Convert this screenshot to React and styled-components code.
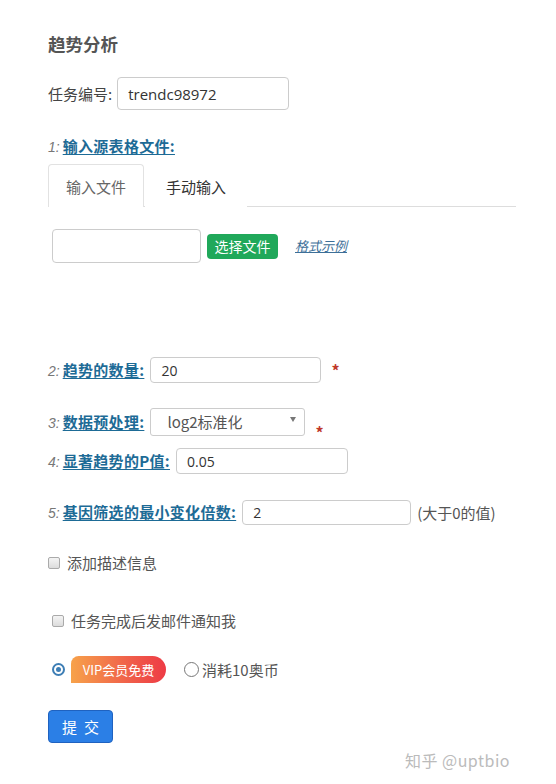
import React from 'react';
import styled, { createGlobalStyle } from 'styled-components';

const GlobalStyle = createGlobalStyle`
  html, body {
    margin: 0;
    padding: 0;
    background: #fff;
  }
  body {
    font-family: "Noto Sans CJK SC", "Noto Sans", sans-serif;
    color: #333;
  }
`;

const Page = styled.div`
  position: relative;
  width: 556px;
  height: 784px;
  box-sizing: border-box;
  padding: 32px 0 0 48px;
  overflow: hidden;
`;

const Title = styled.h3`
  margin: 0;
  height: 24px;
  line-height: 24px;
  font-size: 17.5px;
  font-weight: 700;
  color: #555;
`;

const Row = styled.div`
  display: flex;
  align-items: center;
  margin-top: ${(p) => p.$mt || 0}px;
  margin-left: ${(p) => p.$ml || 0}px;
  gap: ${(p) => (p.$gap == null ? 5 : p.$gap)}px;
  font-size: 15px;
  line-height: 20px;
`;

const Label = styled.span`
  font-size: 15px;
  color: #444;
  white-space: nowrap;
`;

const StepLabel = styled.span`
  display: inline-flex;
  align-items: baseline;
  white-space: nowrap;
  font-size: 15px;
`;

const StepNo = styled.i`
  font-family: "Liberation Sans", sans-serif;
  color: #777;
  margin-right: 3px;
  font-size: 14px;
`;

const StepLink = styled.a`
  color: #1d6b96;
  font-weight: 700;
  font-size: 15px;
  letter-spacing: 0.3px;
  text-decoration: underline;
  text-underline-offset: 2px;
`;

const TextInput = styled.input`
  box-sizing: border-box;
  width: ${(p) => p.$w}px;
  height: ${(p) => p.$h || 26}px;
  padding: 0 10px;
  border: 1px solid #ccc;
  border-radius: 4px;
  font-family: "Open Sans", "Noto Sans", sans-serif;
  font-size: ${(p) => p.$fs || 14}px;
  color: #333;
  background: #fff;
  outline: none;
`;

const Star = styled.span`
  color: #c0392b;
  font-size: 16px;
  font-weight: 700;
  margin-left: 4px;
  align-self: ${(p) => (p.$low ? 'flex-end' : 'center')};
  line-height: 20px;
  margin-bottom: ${(p) => (p.$low ? '-6px' : '0')};
`;

const Tabs = styled.div`
  display: flex;
  width: 468px;
  height: 42px;
  margin-top: 7px;
  border-bottom: 1px solid #ddd;
`;

const Tab = styled.div`
  display: flex;
  align-items: center;
  padding: 0 ${(p) => (p.$active ? 17 : 20)}px;
  margin-left: ${(p) => (p.$active ? 0 : 1)}px;
  box-sizing: border-box;
  height: 43px;
  margin-bottom: -1px;
  font-size: 15px;
  color: ${(p) => (p.$active ? '#666' : '#333')};
  background: #fff;
  border: 1px solid ${(p) => (p.$active ? '#e2e2e2' : 'transparent')};
  border-bottom: none;
  border-radius: 4px 4px 0 0;
`;

const GreenButton = styled.button`
  height: 25px;
  width: 71px;
  padding: 0;
  border: none;
  border-radius: 4px;
  background: #20a85a;
  color: #fff;
  font-family: inherit;
  font-size: 14px;
  margin-left: 1px;
`;

const ExampleLink = styled.a`
  margin-left: 12px;
  font-size: 13px;
  font-style: italic;
  color: #3d6f98;
  text-decoration: underline;
`;

const Select = styled.div`
  box-sizing: border-box;
  width: ${(p) => p.$w}px;
  height: 28px;
  display: flex;
  align-items: center;
  justify-content: space-between;
  padding: 0 8px 0 16px;
  border: 1px solid #ccc;
  border-radius: 3px;
  font-size: 15px;
  color: #555;
  background: #fff;
`;

const Caret = styled.span`
  width: 0;
  height: 0;
  border-left: 3px solid transparent;
  border-right: 3px solid transparent;
  border-top: 5px solid #777;
  margin-top: -6px;
`;

const Hint = styled.span`
  color: #555;
  font-size: 15px;
  white-space: nowrap;
`;

const Check = styled.span`
  display: inline-block;
  width: 10px;
  height: 10px;
  border: 1px solid #aaa;
  border-radius: 2px;
  background: linear-gradient(#f4f4f4, #dcdcdc);
  margin-right: 3px;
`;

const Radio = styled.span`
  box-sizing: border-box;
  display: inline-flex;
  align-items: center;
  justify-content: center;
  width: ${(p) => p.$size || 13}px;
  height: ${(p) => p.$size || 13}px;
  border-radius: 50%;
  border: ${(p) => (p.$on ? '2px solid #3d7eb5' : '1px solid #777')};
  background: #fff;
  &::after {
    content: '';
    display: ${(p) => (p.$on ? 'block' : 'none')};
    width: 5px;
    height: 5px;
    border-radius: 50%;
    background: #3d7eb5;
  }
`;

const VipBadge = styled.span`
  display: inline-flex;
  align-items: center;
  justify-content: center;
  width: 95px;
  height: 27px;
  border-radius: 8px 14px 14px 0;
  background: linear-gradient(90deg, #f7a24a 0%, #f0604a 60%, #ee3b45 100%);
  color: #fff;
  font-size: 13px;
  margin: 0 18px 0 6px;
`;

const Submit = styled.button`
  display: block;
  margin-top: 27px;
  width: 65px;
  height: 33px;
  border: 1px solid #1f62c0;
  border-radius: 4px;
  background: #2b7fe6;
  color: #fff;
  font-family: inherit;
  font-size: 15px;
  letter-spacing: 7px;
  padding: 0 0 0 7px;
`;

const Watermark = styled.div`
  position: absolute;
  right: 46px;
  top: 748px;
  font-size: 16px;
  color: #bbb;
  letter-spacing: 0.5px;
`;

const Step = ({ no, children }) => (
  <StepLabel>
    <StepNo>{no}:</StepNo>
    <StepLink>{children}</StepLink>
  </StepLabel>
);

export default function App() {
  return (
    <>
      <GlobalStyle />
      <Page>
        <Title>趋势分析</Title>

        <Row $mt={21}>
          <Label>任务编号:</Label>
          <TextInput $w={172} $h={33} $fs={15} defaultValue="trendc98972" />
        </Row>

        <Row $mt={26}>
          <Step no="1">输入源表格文件:</Step>
        </Row>

        <Tabs>
          <Tab $active>输入文件</Tab>
          <Tab>手动输入</Tab>
        </Tabs>

        <Row $mt={22} $ml={4}>
          <TextInput $w={149} $h={34} />
          <GreenButton>选择文件</GreenButton>
          <ExampleLink>格式示例</ExampleLink>
        </Row>

        <Row $mt={94} $gap={6}>
          <Step no="2">趋势的数量:</Step>
          <TextInput $w={171} defaultValue="20" />
          <Star>*</Star>
        </Row>

        <Row $mt={25} $gap={6}>
          <Step no="3">数据预处理:</Step>
          <Select $w={155}>
            log2标准化
            <Caret />
          </Select>
          <Star $low>*</Star>
        </Row>

        <Row $mt={12} $gap={6}>
          <Step no="4">显著趋势的P值:</Step>
          <TextInput $w={172} defaultValue="0.05" />
        </Row>

        <Row $mt={26} $gap={6}>
          <Step no="5">基因筛选的最小变化倍数:</Step>
          <TextInput $w={169} $h={25} defaultValue="2" />
          <Hint>(大于0的值)</Hint>
        </Row>

        <Row $mt={28} $gap={4}>
          <Check />
          <Hint>添加描述信息</Hint>
        </Row>

        <Row $mt={38} $ml={4} $gap={4}>
          <Check />
          <Hint>任务完成后发邮件通知我</Hint>
        </Row>

        <Row $mt={25} $ml={4} $gap={0}>
          <Radio $on />
          <VipBadge>VIP会员免费</VipBadge>
          <Radio $size={15} />
          <Hint style={{ marginLeft: 3 }}>消耗10奥币</Hint>
        </Row>

        <Submit>提交</Submit>

        <Watermark>知乎 @uptbio</Watermark>
      </Page>
    </>
  );
}
